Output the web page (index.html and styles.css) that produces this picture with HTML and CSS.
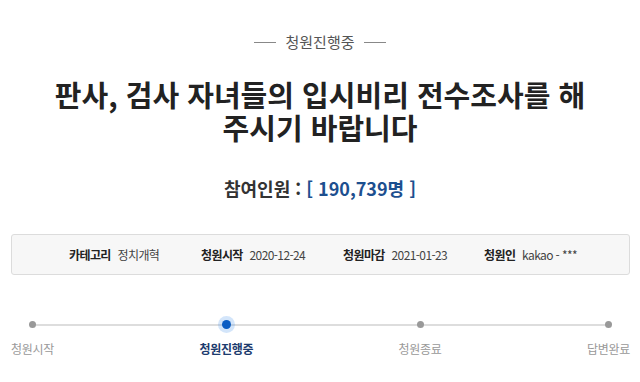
FILE: index.html
```html
<!DOCTYPE html>
<html lang="ko">
<head>
<meta charset="UTF-8">
<meta name="viewport" content="width=device-width, initial-scale=1.0">
<title>청원진행중</title>
<link rel="stylesheet" href="styles.css">
</head>
<body>

<div class="status">
    <span class="dash"></span>
    <span class="status-text">청원진행중</span>
    <span class="dash"></span>
</div>

<h1 class="title">판사, 검사 자녀들의 입시비리 전수조사를 해<br>주시기 바랍니다</h1>

<p class="count">참여인원 : <span class="num">[ 190,739명 ]</span></p>

<div class="info">
    <div class="item"><b>카테고리</b> 정치개혁</div>
    <div class="item"><b>청원시작</b> 2020-12-24</div>
    <div class="item"><b>청원마감</b> 2021-01-23</div>
    <div class="item"><b>청원인</b> kakao - ***</div>
</div>

<div class="steps">
    <div class="step"><span class="dot"></span><span class="label">청원시작</span></div>
    <div class="step active"><span class="dot"></span><span class="label">청원진행중</span></div>
    <div class="step"><span class="dot"></span><span class="label">청원종료</span></div>
    <div class="step"><span class="dot"></span><span class="label">답변완료</span></div>
</div>

</body>
</html>
```

FILE: styles.css
```css
body {
    margin: 0;
    background-color: #fff;
    font-family: "Noto Sans CJK KR", "Noto Sans", sans-serif;
    color: #333;
}
.status {
    display: flex;
    justify-content: center;
    align-items: center;
    gap: 9px;
    margin-top: 32px;
    height: 20px;
}
.dash {
    width: 22px;
    height: 1px;
    background-color: #888;
}
.status-text {
    font-size: 15px;
    color: #555;
    line-height: 20px;
}
.title {
    margin: 26px 0 0;
    font-size: 29px;
    line-height: 33px;
    font-weight: bold;
    color: #222;
    text-align: center;
}
.count {
    margin: 31px 0 0;
    font-size: 18px;
    line-height: 26px;
    font-weight: bold;
    text-align: center;
    color: #333;
}
.count .num {
    color: #1d4f8f;
}
.info {
    display: grid;
    grid-template-columns: 132px 142px 141px auto;
    align-items: center;
    margin: 33px 10px 0 11px;
    padding-left: 57px;
    height: 39px;
    border: 1px solid #dcdcdc;
    border-radius: 3px;
    background-color: #f7f7f7;
    font-size: 12px;
    letter-spacing: -0.6px;
    color: #444;
}
.info b {
    color: #222;
    margin-right: 4px;
}
.steps {
    position: relative;
    display: flex;
    justify-content: space-between;
    margin: 45px 10px 0 11px;
}
.steps::before {
    content: "";
    position: absolute;
    left: 20px;
    right: 20px;
    top: 4px;
    height: 2px;
    background-color: #ddd;
}
.step {
    position: relative;
    display: flex;
    flex-direction: column;
    align-items: center;
}
.dot {
    width: 7px;
    height: 7px;
    margin: 1px 0 2px;
    border-radius: 50%;
    background-color: #999;
}
.step.active .dot {
    width: 9px;
    height: 9px;
    margin: 0 0 1px;
    background-color: #0b5dc3;
    box-shadow: 0 0 0 4px rgba(80, 150, 235, 0.25);
}
.label {
    margin-top: 10px;
    font-size: 12px;
    line-height: 18px;
    color: #999;
    letter-spacing: -0.3px;
}
.step.active .label {
    color: #1c3b6e;
    font-weight: bold;
}
```
